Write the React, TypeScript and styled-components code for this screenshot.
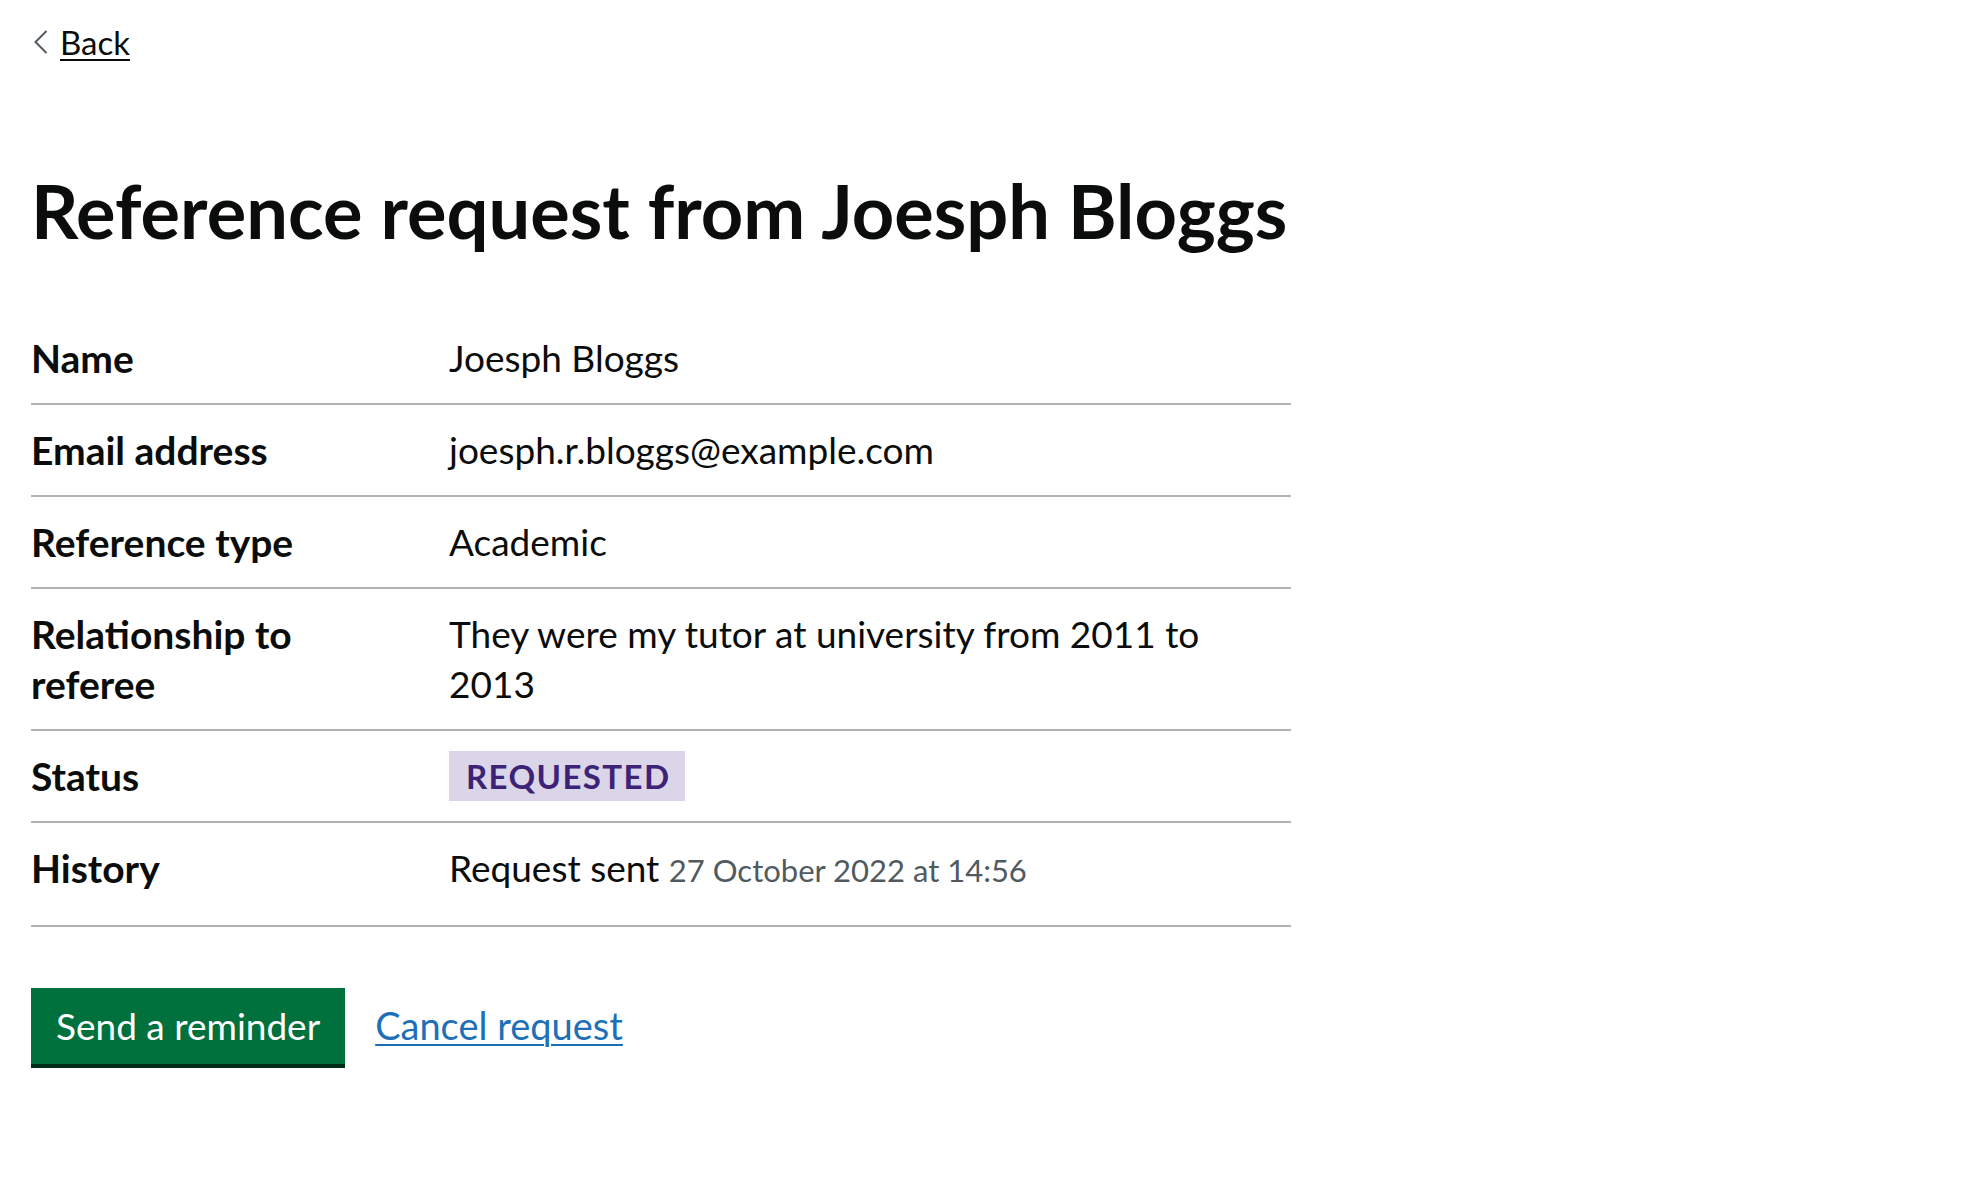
import React from "react";
import styled, { createGlobalStyle } from "styled-components";

const GlobalStyle = createGlobalStyle`
  html, body {
    margin: 0;
    padding: 0;
    background: #ffffff;
  }
  body {
    font-family: Lato, "Noto Sans", Arial, sans-serif;
    color: #0b0c0c;
    -webkit-font-smoothing: antialiased;
  }
  * { box-sizing: border-box; }
`;

const Page = styled.main`
  padding: 0 31px 80px;
  width: 1322px;
`;

const BackLink = styled.a`
  display: flex;
  align-items: center;
  gap: 12px;
  width: fit-content;
  margin-top: 22px;
  padding-left: 2px;
  font-size: 33px;
  line-height: 40px;
  color: #0b0c0c;
  text-decoration: underline;
  text-decoration-thickness: 2px;
  text-underline-offset: 4px;
`;

const Chevron = styled.svg`
  flex: none;
  display: block;
`;

const Heading = styled.h1`
  margin: 109px 0 62px;
  font-size: 74px;
  line-height: 80px;
  font-weight: 700;
`;

const SummaryList = styled.dl`
  margin: 0 0 61px;
  width: 1260px;
`;

const Row = styled.div<{ $padBottom?: number }>`
  display: grid;
  grid-template-columns: 418px 1fr;
  padding: 20px 0 ${(p) => p.$padBottom ?? 20}px;
  border-bottom: 2px solid #b1b4b6;
`;

const Key = styled.dt`
  margin: 0;
  padding-right: 70px;
  font-weight: 700;
  font-size: 39px;
  line-height: 50px;
`;

const Value = styled.dd`
  margin: 0;
  padding-right: 80px;
  font-size: 37px;
  line-height: 50px;
`;

const Tag = styled.strong`
  display: inline-block;
  vertical-align: top;
  padding: 9px 15px 8px 17px;
  background: #dbd5e9;
  color: #3d2375;
  font-size: 33px;
  line-height: 33px;
  font-weight: 700;
  letter-spacing: 1.4px;
  text-transform: uppercase;
`;

const Secondary = styled.span`
  color: #505a5f;
  font-size: 31px;
`;

const ButtonGroup = styled.div`
  display: flex;
  align-items: baseline;
  gap: 30px;
`;

const Button = styled.button`
  font-family: inherit;
  font-size: 37px;
  line-height: 46px;
  padding: 15px 25px 15px;
  border: none;
  border-radius: 0;
  background: #00703c;
  color: #ffffff;
  box-shadow: 0 4px 0 #002d18;
  cursor: pointer;
`;

const TextLink = styled.a`
  font-size: 38px;
  line-height: 46px;
  color: #1d70b8;
  text-decoration: underline;
  text-decoration-thickness: 2px;
  text-underline-offset: 4px;
`;

type Item = { key: string; value: React.ReactNode; padBottom?: number };

const items: Item[] = [
  { key: "Name", value: "Joesph Bloggs" },
  { key: "Email address", value: "joesph.r.bloggs@example.com" },
  { key: "Reference type", value: "Academic" },
  {
    key: "Relationship to referee",
    value: "They were my tutor at university from 2011 to 2013",
  },
  { key: "Status", value: <Tag>Requested</Tag> },
  {
    key: "History",
    value: (
      <>
        Request sent <Secondary>27 October 2022 at 14:56</Secondary>
      </>
    ),
    padBottom: 30,
  },
];

export default function App() {
  return (
    <>
      <GlobalStyle />
      <Page>
        <BackLink href="#">
          <Chevron width="15" height="24" viewBox="0 0 15 24" aria-hidden="true">
            <polyline
              points="13.5,1 2.5,12 13.5,23"
              fill="none"
              stroke="#505a5f"
              strokeWidth="2"
            />
          </Chevron>
          Back
        </BackLink>
        <Heading>Reference request from Joesph Bloggs</Heading>
        <SummaryList>
          {items.map((it) => (
            <Row key={it.key} $padBottom={it.padBottom}>
              <Key>{it.key}</Key>
              <Value>{it.value}</Value>
            </Row>
          ))}
        </SummaryList>
        <ButtonGroup>
          <Button type="button">Send a reminder</Button>
          <TextLink href="#">Cancel request</TextLink>
        </ButtonGroup>
      </Page>
    </>
  );
}
